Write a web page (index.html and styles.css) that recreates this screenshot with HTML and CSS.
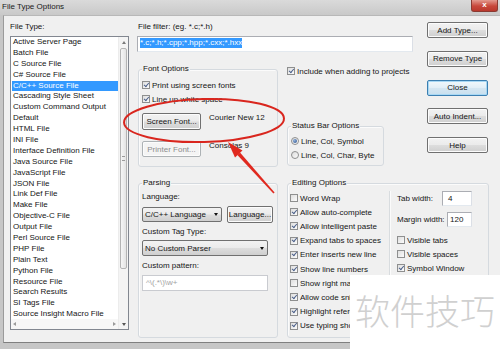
FILE: index.html
```html
<!DOCTYPE html>
<html lang="en">
<head>
    <meta charset="UTF-8">
    <title>File Type Options</title>
    <link rel="stylesheet" href="styles.css">
</head>
<body>
    <div class="window">
        <div class="titlebar">
            <span class="title">File Type Options</span>
            <span class="close-x">x</span>
        </div>
        <div class="frame">
            <div class="client">
                <div class="types">
                    <div class="label">File Type:</div>
                    <div class="listbox">
                        <ul class="items">
                            <li>Active Server Page</li>
                            <li>Batch File</li>
                            <li>C Source File</li>
                            <li>C# Source File</li>
                            <li class="selected">C/C++ Source File</li>
                            <li>Cascading Style Sheet</li>
                            <li>Custom Command Output</li>
                            <li>Default</li>
                            <li>HTML File</li>
                            <li>INI File</li>
                            <li>Interface Definition File</li>
                            <li>Java Source File</li>
                            <li>JavaScript File</li>
                            <li>JSON File</li>
                            <li>Link Def File</li>
                            <li>Make File</li>
                            <li>Objective-C File</li>
                            <li>Output File</li>
                            <li>Perl Source File</li>
                            <li>PHP File</li>
                            <li>Plain Text</li>
                            <li>Python File</li>
                            <li>Resource File</li>
                            <li>Search Results</li>
                            <li>SI Tags File</li>
                            <li>Source Insight Macro File</li>
                        </ul>
                        <div class="vscroll">
                            <span class="arrow up"></span>
                            <span class="thumb"></span>
                            <span class="track"></span>
                            <span class="arrow down"></span>
                        </div>
                        <div class="hscroll">
                            <span class="arrow left"></span>
                            <span class="arrow right"></span>
                        </div>
                    </div>
                </div>

                <div class="main">
                    <div class="upper">
                        <div class="upper-left">
                            <div class="label filter-label">File filter: (eg. *.c;*.h)</div>
                            <div class="textbox filter"><span class="sel">*.c;*.h;*.cpp;*.hpp;*.cxx;*.hxx</span></div>

                            <div class="font-row">
                                <div class="group font-group">
                                    <div class="group-title">Font Options</div>
                                    <div class="check first"><span class="box on"></span>Print using screen fonts</div>
                                    <div class="check"><span class="box on"></span>Line up white space</div>
                                    <div class="font-line screen">
                                        <span class="btn font-btn">Screen Font...</span>
                                        <span class="font-name">Courier New 12</span>
                                    </div>
                                    <div class="font-line printer">
                                        <span class="btn font-btn disabled">Printer Font...</span>
                                        <span class="font-name">Consolas 9</span>
                                    </div>
                                </div>

                                <div class="side">
                                    <div class="check include"><span class="box on"></span>Include when adding to projects</div>
                                    <div class="group status-group">
                                        <div class="group-title">Status Bar Options</div>
                                        <div class="radio first"><span class="dot on"></span>Line, Col, Symbol</div>
                                        <div class="radio"><span class="dot"></span>Line, Col, Char, Byte</div>
                                    </div>
                                </div>
                            </div>
                        </div>

                        <div class="buttons">
                            <span class="btn">Add Type...</span>
                            <span class="btn">Remove Type</span>
                            <span class="btn default">Close</span>
                            <span class="btn">Auto Indent...</span>
                            <span class="btn">Help</span>
                        </div>
                    </div>

                    <div class="lower">
                        <div class="group parsing-group">
                            <div class="group-title">Parsing</div>
                            <div class="label lang-label">Language:</div>
                            <div class="lang-row">
                                <span class="combo lang-combo">C/C++ Language</span>
                                <span class="btn lang-btn">Language...</span>
                            </div>
                            <div class="label tag-label">Custom Tag Type:</div>
                            <span class="combo tag-combo">No Custom Parser</span>
                            <div class="label pattern-label">Custom pattern:</div>
                            <div class="textbox pattern">^\(.*\)\w+</div>
                        </div>

                        <div class="group editing-group">
                            <div class="group-title">Editing Options</div>
                            <div class="edit-cols">
                                <div class="edit-left">
                                    <div class="check row"><span class="box"></span>Word Wrap</div>
                                    <div class="check row"><span class="box on"></span>Allow auto-complete</div>
                                    <div class="check row"><span class="box on"></span>Allow intelligent paste</div>
                                    <div class="check row"><span class="box on"></span>Expand tabs to spaces</div>
                                    <div class="check row"><span class="box on"></span>Enter inserts new line</div>
                                    <div class="check row"><span class="box on"></span>Show line numbers</div>
                                    <!-- these rows run under the watermark, only their start shows -->
                                    <div class="check row"><span class="box"></span><span class="covered">Show right margin</span></div>
                                    <div class="check row"><span class="box on"></span><span class="covered">Allow code snippets</span></div>
                                    <div class="check row"><span class="box on"></span><span class="covered">Highlight references</span></div>
                                    <div class="check row"><span class="box on"></span><span class="covered">Use typing shortcuts</span></div>
                                </div>
                                <div class="edit-right">
                                    <div class="num-row tab-row">
                                        <span class="num-label">Tab width:</span>
                                        <span class="textbox num">4</span>
                                    </div>
                                    <div class="num-row margin-row">
                                        <span class="num-label">Margin width:</span>
                                        <span class="textbox num">120</span>
                                    </div>
                                    <div class="check row first-right"><span class="box"></span>Visible tabs</div>
                                    <div class="check row"><span class="box"></span>Visible spaces</div>
                                    <div class="check row"><span class="box on"></span>Symbol Window</div>
                                </div>
                            </div>
                        </div>
                    </div>
                </div>
            </div>
        </div>

        <!-- red annotation drawn over the dialog -->
        <svg class="annotation" width="500" height="349" viewBox="0 0 500 349">
            <ellipse cx="204" cy="120.5" rx="80" ry="21.5" transform="rotate(-1.5 204 120.5)" fill="none" stroke="#d9261e" stroke-width="2"/>
            <polygon points="228,142 242.5,150.5 235,157.5" fill="#e0291f"/>
            <polygon points="240,152.6 274.6,192.6 273.4,193.6 237.4,155" fill="#e0291f"/>
        </svg>

        <div class="watermark">软件技巧</div>
    </div>
</body>
</html>
```

FILE: styles.css
```css
body {
    margin: 0;
    font-family: 'Liberation Sans', Arial, sans-serif;
    font-size: 8px;
    color: #151515;
}

.window {
    position: relative;
    width: 500px;
    height: 349px;
    overflow: hidden;
    display: flex;
    flex-direction: column;
    background: #c6c6c6;
}

/* title bar */
.titlebar {
    flex: none;
    height: 15px;
    display: flex;
    align-items: flex-start;
    background: linear-gradient(#dadada, #c9c9c9);
}

.title {
    margin: 2px 0 0 2px;
    line-height: 10px;
    color: #1a1a1a;
}

.close-x {
    margin-left: auto;
    margin-right: 2px;
    width: 27px;
    height: 12px;
    box-sizing: border-box;
    border: 1px solid #8a3a32;
    border-top: none;
    border-radius: 0 0 3px 3px;
    background: linear-gradient(#e39a8f, #c8473b 55%, #b9382d);
    color: #fff;
    font-weight: bold;
    font-size: 8px;
    line-height: 10px;
    text-align: center;
}

.frame {
    flex: 1;
    display: flex;
    padding: 0 0 6px 3px;
}

.client {
    flex: 1;
    display: flex;
    align-items: flex-start;
    padding: 6px 0 0 6px;
    background: #f0f0f0;
    border-left: 1px solid #9a9a9a;
    border-top: 1px solid #b8b8b8;
    border-bottom: 1px solid #7f7f7f;
}

.label {
    line-height: 10px;
}

/* file type list */
.types {
    width: 119px;
    flex: none;
}

.listbox {
    margin-top: 4px;
    height: 294px;
    box-sizing: border-box;
    border: 1px solid #828790;
    background: #fff;
    display: grid;
    grid-template-columns: 1fr 10px;
    grid-template-rows: 1fr 10px;
}

.items {
    list-style: none;
    margin: 0;
    padding: 0;
    overflow: hidden;
}

.items li {
    height: 10.9px;
    line-height: 10.9px;
    padding-left: 1px;
    margin-left: 1px;
    white-space: nowrap;
}

.items li.selected {
    background: #3399ff;
    color: #fff;
}

.vscroll {
    grid-row: 1 / 3;
    grid-column: 2;
    display: flex;
    flex-direction: column;
    background: #f4f4f4;
    border-left: 1px solid #ececec;
}

.arrow {
    flex: none;
    height: 10px;
    display: flex;
    align-items: center;
    justify-content: center;
}

.arrow::after {
    content: "";
    border: 2.5px solid transparent;
}

.arrow.up::after { border-bottom: 3px solid #7a7a7a; border-top-width: 0; }
.arrow.down::after { border-top: 3px solid #555; border-bottom-width: 0; }
.arrow.left::after { border-right: 3px solid #9a9a9a; border-left-width: 0; }
.arrow.right::after { border-left: 3px solid #9a9a9a; border-right-width: 0; }

.thumb {
    height: 219px;
    margin: 1px 1px 0;
    border: 1px solid #b4b4b4;
    border-radius: 2px;
    background: linear-gradient(90deg, #f6f6f6, #e4e4e4);
    display: flex;
    align-items: center;
    justify-content: center;
}

.thumb::after {
    content: "";
    width: 3px;
    height: 3px;
    border-top: 1px solid #9a9a9a;
    border-bottom: 1px solid #9a9a9a;
}

.track {
    flex: 1;
}

.hscroll {
    display: flex;
    justify-content: space-between;
    padding: 0 2px 0 2px;
    background: #f7f7f7;
}

/* middle part */
.main {
    margin-left: 8px;
    width: 352px;
    flex: none;
}

.upper {
    display: flex;
    align-items: flex-start;
}

.upper-left {
    width: 276px;
    flex: none;
}

.filter-label {
    padding-left: 1px;
}

.textbox {
    box-sizing: border-box;
    background: #fff;
    border: 1px solid #abadb3;
    border-right-color: #dbdfe6;
    border-bottom-color: #e3e9ef;
}

.filter {
    margin-top: 4px;
    height: 16px;
    padding: 1px 0 0 2px;
}

.sel {
    display: inline-block;
    line-height: 10px;
    background: #3399ff;
    color: #fff;
}

.font-row {
    margin-top: 17px;
    display: flex;
    align-items: flex-start;
}

.group {
    box-sizing: border-box;
    border: 1px solid #d5dadf;
    border-radius: 3px;
    box-shadow: inset 1px 1px #fbfbfb;
    padding-left: 3px;
}

.group-title {
    display: table;
    margin: -6px 0 0 0;
    padding: 0 1px;
    line-height: 10px;
    background: #f0f0f0;
}

.font-group {
    margin-left: 1px;
    width: 140px;
    height: 98px;
}

.check, .radio {
    display: flex;
    align-items: center;
    height: 14px;
    white-space: nowrap;
}

.font-group .check.first {
    margin-top: 4px;
}

.box {
    flex: none;
    position: relative;
    width: 8px;
    height: 8px;
    box-sizing: border-box;
    margin-right: 2px;
    border: 1px solid #8e8f8f;
    background: linear-gradient(135deg, #dedede, #fbfbfb);
}

.box.on::after {
    content: "";
    position: absolute;
    left: 1px;
    top: 0.5px;
    width: 3.5px;
    height: 2px;
    border-left: 1.3px solid #4a5f8a;
    border-bottom: 1.3px solid #4a5f8a;
    transform: rotate(-50deg);
}

.dot {
    flex: none;
    width: 8px;
    height: 8px;
    box-sizing: border-box;
    margin-right: 2px;
    border: 1px solid #8e8f8f;
    border-radius: 50%;
    background: linear-gradient(135deg, #dcdcdc, #fcfcfc);
    display: flex;
    align-items: center;
    justify-content: center;
}

.dot.on::after {
    content: "";
    width: 4px;
    height: 4px;
    border-radius: 50%;
    background: radial-gradient(circle at 35% 35%, #8fb0dc, #2a4f88);
}

.btn {
    box-sizing: border-box;
    display: flex;
    align-items: center;
    justify-content: center;
    height: 16px;
    border: 1px solid #707070;
    border-radius: 2px;
    background: linear-gradient(#f2f2f2, #ebebeb 48%, #dddddd 52%, #cfcfcf);
    box-shadow: inset 0 0 0 1px #fcfcfc;
    white-space: nowrap;
}

.btn.disabled {
    border-color: #adb2b5;
    background: #f4f4f4;
    color: #8d8d8d;
}

.btn.default {
    border-color: #3c7fb1;
    box-shadow: inset 0 0 0 1px #a8d8f4;
    background: linear-gradient(#f1f8fc, #e2eff7 48%, #d4e6f2 52%, #c8dfee);
}

.font-line {
    display: flex;
    align-items: flex-start;
}

.font-line.screen {
    margin-top: 7px;
}

.font-line.screen .btn {
    height: 17px;
}

.font-line.printer {
    margin-top: 11px;
}

.font-btn {
    width: 59px;
}

.font-name {
    margin-left: 8px;
    line-height: 10px;
}

.side {
    margin-left: 9px;
}

.check.include {
    margin-top: -3px;
    height: 10px;
}

.status-group {
    margin-top: 50px;
    width: 97px;
    height: 40px;
}

.radio.first {
    margin-top: 3px;
}

.buttons {
    margin-left: 14px;
    width: 61px;
    flex: none;
    display: flex;
    flex-direction: column;
    gap: 12.8px;
}

/* lower groups */
.lower {
    margin-top: 16px;
    margin-left: 1px;
    display: flex;
    align-items: flex-start;
}

.parsing-group {
    width: 140px;
    height: 155px;
}

.lang-label {
    margin-top: 4px;
}

.lang-row {
    margin-top: 4px;
    height: 17px;
    display: flex;
    align-items: center;
}

.combo {
    position: relative;
    box-sizing: border-box;
    display: flex;
    align-items: center;
    padding-left: 2px;
    border: 1px solid #707070;
    border-radius: 2px;
    background: linear-gradient(#f2f2f2, #ebebeb 48%, #dddddd 52%, #cfcfcf);
    white-space: nowrap;
}

.combo::after {
    content: "";
    margin-left: auto;
    margin-right: 3px;
    border-left: 2.5px solid transparent;
    border-right: 2.5px solid transparent;
    border-top: 3px solid #111;
}

.lang-combo {
    width: 80px;
    height: 15px;
}

.lang-btn {
    margin-left: 5px;
    width: 46px;
    height: 17px;
}

.tag-label {
    margin-top: 4px;
}

.tag-combo {
    margin-top: 3px;
    width: 126px;
    height: 16px;
}

.pattern-label {
    margin-top: 5px;
}

.pattern {
    margin-top: 4px;
    width: 126px;
    height: 16px;
    padding-left: 3px;
    line-height: 14px;
    color: #a3a3a3;
    border-color: #c9cbd0;
}

.editing-group {
    margin-left: 9px;
    width: 202px;
    height: 155px;
    padding-left: 0;
}

.editing-group .group-title {
    margin-left: 3px;
}

.edit-cols {
    margin-top: 3px;
    display: flex;
    align-items: flex-start;
}

.edit-left {
    width: 99px;
    padding-left: 2px;
    flex: none;
}

.check.row {
    height: 14.2px;
}

/* label text hidden by the watermark box is clipped at its edge */
.covered {
    max-width: 50px;
    overflow: hidden;
}

.edit-right {
    padding-left: 7px;
    height: 141px;
    border-left: 1px solid #d8dcdf;
    box-shadow: inset 1px 0 #fbfbfb;
}

.num-row {
    display: flex;
    align-items: center;
    height: 15px;
}

.num-label {
    white-space: nowrap;
}

.tab-row .num-label {
    width: 45px;
}

.margin-row {
    margin-top: 6px;
}

.margin-row .num-label {
    width: 50px;
}

.textbox.num {
    height: 15px;
    display: flex;
    align-items: center;
    padding-left: 5px;
}

.tab-row .num {
    width: 30px;
}

.margin-row .num {
    width: 25px;
    padding-left: 2px;
}

.check.first-right {
    margin-top: 6px;
}

/* overlays */
.annotation {
    position: absolute;
    left: 0;
    top: 0;
    pointer-events: none;
}

.watermark {
    position: absolute;
    left: 350px;
    top: 275px;
    width: 150px;
    height: 74px;
    box-sizing: border-box;
    padding-left: 5px;
    background: #fff;
    color: #d0d0d0;
    font-family: 'Noto Sans CJK SC', sans-serif;
    font-weight: 300;
    font-size: 35px;
    line-height: 70px;
    white-space: nowrap;
}
```
